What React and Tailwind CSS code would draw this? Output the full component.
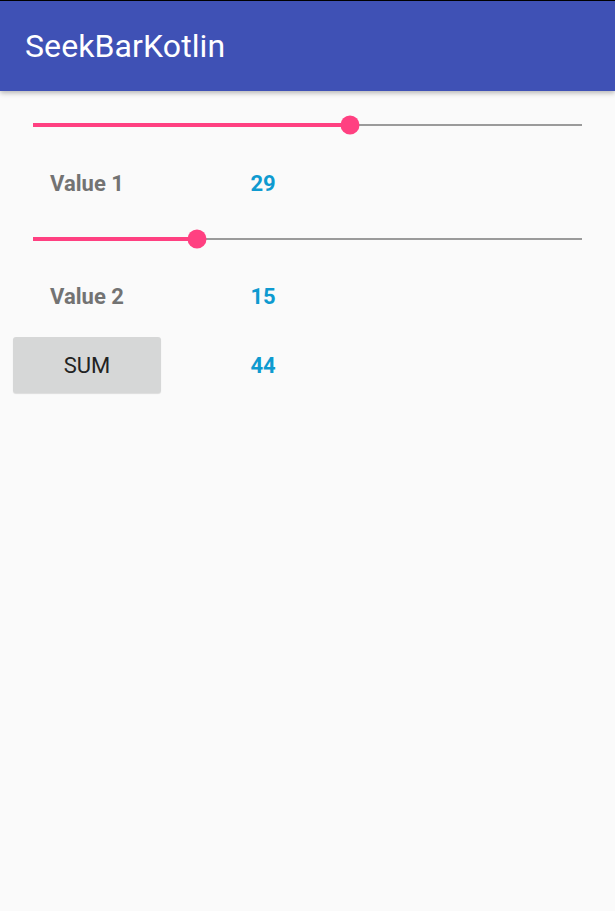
import React from "react";

function Seek({ pct }) {
  return (
    <div className="relative h-[20px] mx-[33px] flex items-center">
      <div className="w-full h-[2px] bg-[#9a9a9a]" />
      <div
        className="absolute left-0 top-1/2 -translate-y-1/2 h-[4px] bg-[#ff4081]"
        style={{ width: pct + "%" }}
      />
      <div
        className="absolute top-1/2 -translate-y-1/2 -translate-x-1/2 w-[19px] h-[19px] rounded-full bg-[#ff4081]"
        style={{ left: pct + "%" }}
      />
    </div>
  );
}

export default function App() {
  return (
    <div
      className="w-[615px] h-[911px] bg-[#fafafa] overflow-hidden"
      style={{ fontFamily: "Roboto, 'Noto Sans', sans-serif" }}
    >
      <div className="border-t border-black relative z-10 h-[91px] bg-[#3f51b5] flex items-center pl-[25px] shadow-[0_2px_5px_rgba(0,0,0,0.28)]">
        <span className="text-white text-[32px] leading-none tracking-[0.1px]">SeekBarKotlin</span>
      </div>
      <div className="h-[66px] pt-[2px] flex flex-col justify-center">
        <Seek pct={57.8} />
      </div>
      <div className="h-[52px] flex items-center pl-[13px]">
        <div className="w-[148px] text-center text-[22px] font-bold text-[#737373]">Value 1</div>
        <div className="w-[204px] text-center text-[22px] font-bold text-[#0e9ad0]">29</div>
      </div>
      <div className="h-[58px] pt-[2px] flex flex-col justify-center">
        <Seek pct={29.9} />
      </div>
      <div className="h-[58px] flex items-center pl-[13px]">
        <div className="w-[148px] text-center text-[22px] font-bold text-[#737373]">Value 2</div>
        <div className="w-[204px] text-center text-[22px] font-bold text-[#0e9ad0]">15</div>
      </div>
      <div className="mt-[12px] flex items-center pl-[13px]">
        <button className="w-[148px] h-[56px] rounded-[3px] bg-[#d6d7d7] text-[22px] text-[#222] shadow-[0_1px_1px_rgba(0,0,0,0.12)]">
          SUM
        </button>
        <div className="w-[204px] text-center text-[22px] font-bold text-[#0e9ad0]">44</div>
      </div>
    </div>
  );
}
